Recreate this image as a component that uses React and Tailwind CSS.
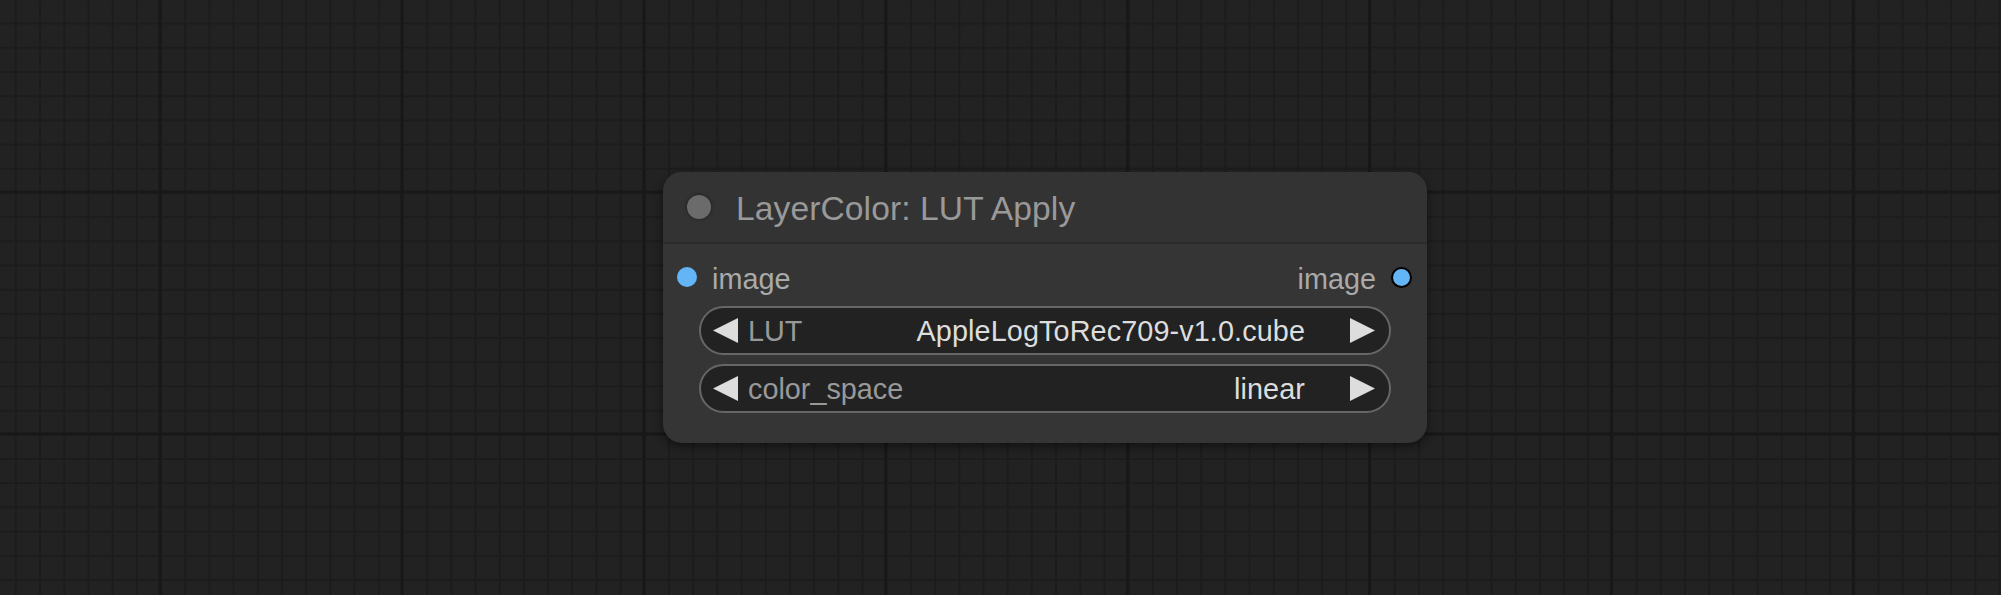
import React from 'react';

const font = { fontFamily: '"Liberation Sans", Arial, sans-serif' };

function GridBackground() {
  // litegraph style canvas grid: minor every ~24px, major every ~242px
  return (
    <svg className="absolute inset-0" width="2001" height="595">
      <defs>
        <pattern id="minor" x="14.9" y="22.6" width="24.19" height="24.19" patternUnits="userSpaceOnUse">
          <rect x="0" y="0" width="2" height="24.19" fill="#1c1c1c" />
          <rect x="0" y="0" width="24.19" height="2" fill="#1c1c1c" />
        </pattern>
        <pattern id="major" x="158.5" y="190.5" width="241.9" height="241.9" patternUnits="userSpaceOnUse">
          <rect x="0" y="0" width="3" height="241.9" fill="#181818" />
          <rect x="0" y="0" width="241.9" height="3" fill="#181818" />
        </pattern>
      </defs>
      <rect width="2001" height="595" fill="#222222" />
      <rect width="2001" height="595" fill="url(#minor)" />
      <rect width="2001" height="595" fill="url(#major)" />
    </svg>
  );
}

function Arrow({ dir }) {
  return (
    <svg width="25" height="25" viewBox="0 0 25 25" className="shrink-0">
      {dir === 'left' ? (
        <polygon points="25,0 25,25 0,12.5" fill="#dddddd" />
      ) : (
        <polygon points="0,0 0,25 25,12.5" fill="#dddddd" />
      )}
    </svg>
  );
}

function ComboWidget({ label, value }) {
  return (
    <div className="h-[49px] mx-[36px] rounded-full bg-[#222222] border-2 border-[#666666] flex items-center pl-[12px] pr-[14px]">
      <Arrow dir="left" />
      <span className="ml-[10px] pt-[2px] text-[#999999] text-[28.8px] leading-none">{label}</span>
      <span className="ml-auto pt-[2px] text-[#dddddd] text-[28.8px] leading-none tracking-[0.1px]">{value}</span>
      <span className="w-[45px]" />
      <Arrow dir="right" />
    </div>
  );
}

export default function App() {
  return (
    <div className="relative w-[2001px] h-[595px] overflow-hidden bg-[#222222]" style={font}>
      <GridBackground />

      <div className="absolute left-[663px] top-[172px] w-[764px] rounded-[19px] bg-[#353535] shadow-[0_4px_10px_rgba(0,0,0,0.45)]">
        <header className="h-[72px] flex items-center rounded-t-[19px] bg-[#333333] border-b-2 border-[#2b2b2b]">
          <div className="ml-[24px] w-[24px] h-[24px] rounded-full bg-[#6b6b6b] shadow-[0_0_4px_rgba(0,0,0,0.4)]" />
          <h1 className="ml-[25px] pt-[3px] text-[33.6px] text-[#999999] leading-none tracking-[0.1px]">LayerColor: LUT Apply</h1>
        </header>

        <div className="pt-[9px] pb-[30px]">
          <div className="h-[48px] flex items-center pl-[14px] pr-[15px]">
            <div className="w-[20px] h-[20px] rounded-full bg-[#64b5f6]" />
            <span className="ml-[15px] pt-[5px] text-[28.8px] text-[#aaaaaa]">image</span>
            <span className="ml-auto pt-[5px] text-[28.8px] text-[#aaaaaa]">image</span>
            <div className="ml-[15px] w-[21px] h-[21px] rounded-full bg-[#64b5f6] border-[2.5px] border-black" />
          </div>

          <div className="mt-[5px] flex flex-col gap-[9px]">
            <ComboWidget label="LUT" value="AppleLogToRec709-v1.0.cube" />
            <ComboWidget label="color_space" value="linear" />
          </div>
        </div>
      </div>
    </div>
  );
}
